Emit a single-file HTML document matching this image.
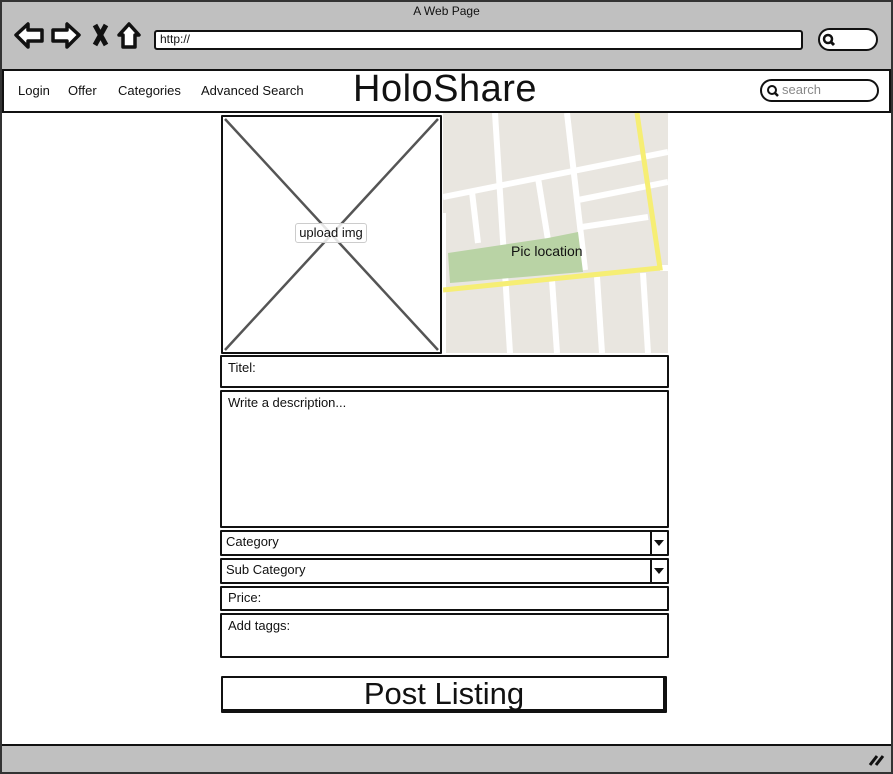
<!DOCTYPE html>
<html><head><meta charset="utf-8"><style>
*{margin:0;padding:0;box-sizing:border-box}
body{width:893px;height:774px;background:#fff;position:relative;overflow:hidden;font-family:"Liberation Sans",sans-serif;color:#111}
.a{position:absolute}
.box{position:absolute;border:2px solid #111;background:#fff;border-radius:1px}
.lbl{position:absolute;font-size:13px}
</style></head><body>
<div class="a" style="left:0;top:0;width:893px;height:774px;border:2px solid #333;background:#fff"></div>
<div class="a" style="left:2px;top:2px;width:889px;height:67px;background:#c0c0c0"></div>
<div class="lbl" style="left:0;width:893px;text-align:center;top:4px;font-size:12px">A Web Page</div>
<svg class="a" style="left:12px;top:20px" width="135" height="32" viewBox="0 0 135 32" fill="#fff" stroke="#111" stroke-width="3.5" stroke-linejoin="round">
<path d="M4 15 L16 4 L16 10 L30 10 L30 21 L16 21 L16 27 Z"/>
<path d="M67 15 L55 4 L55 10 L41 10 L41 21 L55 21 L55 27 Z"/>
<path d="M83 5 L94 25 M94 5 L83 25" stroke-width="5" fill="none"/>
<path d="M107 15 L117 4 L127 15 L123 15 L123 27 L111 27 L111 15 Z"/>
</svg>
<div class="box" style="left:154px;top:30px;width:649px;height:20px;border-radius:3px"></div>
<div class="lbl" style="left:160px;top:32px;font-size:12px">http://</div>
<div class="box" style="left:818px;top:28px;width:60px;height:23px;border-radius:12px"></div>
<svg class="a" style="left:822px;top:33px" width="14" height="14"><circle cx="6" cy="6" r="4" fill="none" stroke="#111" stroke-width="2.5"/><path d="M9 9 L12 12" stroke="#111" stroke-width="3"/></svg>
<div class="a" style="left:2px;top:69px;width:889px;height:44px;border:2px solid #111;background:#fff"></div>
<div class="lbl" style="left:18px;top:83px">Login</div>
<div class="lbl" style="left:68px;top:83px">Offer</div>
<div class="lbl" style="left:118px;top:83px">Categories</div>
<div class="lbl" style="left:201px;top:83px">Advanced Search</div>
<div class="lbl" style="left:353px;top:68px;font-size:38px;letter-spacing:0.5px">HoloShare</div>
<div class="box" style="left:760px;top:79px;width:119px;height:23px;border-radius:12px"></div>
<svg class="a" style="left:766px;top:84px" width="14" height="14"><circle cx="6" cy="6" r="4" fill="none" stroke="#111" stroke-width="2"/><path d="M9 9 L12 12" stroke="#111" stroke-width="2.5"/></svg>
<div class="lbl" style="left:782px;top:82px;color:#888">search</div>

<div class="box" style="left:221px;top:115px;width:221px;height:239px"></div>
<svg class="a" style="left:223px;top:117px" width="217" height="235"><path d="M2 2 L215 233 M215 2 L2 233" stroke="#555" stroke-width="2.5"/></svg>
<div class="a" style="left:295px;top:223px;width:72px;height:20px;border:1px solid #ccc;border-radius:3px;background:rgba(255,255,255,.85);font-size:13px;text-align:center;line-height:18px">upload img</div>

<svg class="a" style="left:443px;top:113px" width="225" height="240" viewBox="0 0 225 240">
<rect width="225" height="240" fill="#e9e6e0"/>
<g stroke="#fff" stroke-width="6" fill="none">
<path d="M0 84 L225 39"/><path d="M135 87 L225 69"/><path d="M139 114 L205 104"/>
<path d="M52 0 L67 240"/><path d="M124 0 L142 157"/><path d="M29 79 L35 130"/><path d="M95 65 L105 127"/>
<path d="M109 167 L114 240"/><path d="M154 164 L159 240"/><path d="M200 160 L205 240"/><path d="M0 100 L0 240" /><path d="M217 155 L225 155"/>
</g>
<path d="M5 140 L105 125 L135 119 L140 159 L7 170 Z" fill="#b9d3a5"/>
<path d="M194 0 L217 155 L0 177" stroke="#f6ee74" stroke-width="5" fill="none"/>
</svg>
<div class="lbl" style="left:511px;top:243px;font-size:14px">Pic location</div>

<div class="box" style="left:220px;top:355px;width:449px;height:33px"></div>
<div class="lbl" style="left:228px;top:360px">Titel:</div>
<div class="box" style="left:220px;top:390px;width:449px;height:138px"></div>
<div class="lbl" style="left:228px;top:395px">Write a description...</div>
<div class="box" style="left:220px;top:530px;width:449px;height:26px"></div>
<div class="a" style="left:650px;top:530px;width:2px;height:26px;background:#111"></div>
<div class="a" style="left:654px;top:540px;border:5px solid transparent;border-top:6px solid #111"></div>
<div class="lbl" style="left:226px;top:534px">Category</div>
<div class="box" style="left:220px;top:558px;width:449px;height:26px"></div>
<div class="a" style="left:650px;top:558px;width:2px;height:26px;background:#111"></div>
<div class="a" style="left:654px;top:568px;border:5px solid transparent;border-top:6px solid #111"></div>
<div class="lbl" style="left:226px;top:562px">Sub Category</div>
<div class="box" style="left:220px;top:586px;width:449px;height:25px"></div>
<div class="lbl" style="left:228px;top:590px">Price:</div>
<div class="box" style="left:220px;top:613px;width:449px;height:45px"></div>
<div class="lbl" style="left:228px;top:618px">Add taggs:</div>
<div class="box" style="left:221px;top:676px;width:446px;height:37px;border-right:4px solid #111;border-bottom:4px solid #111"></div>
<div class="lbl" style="left:221px;top:676px;width:446px;text-align:center;font-size:31px;line-height:36px">Post Listing</div>

<div class="a" style="left:2px;top:744px;width:889px;height:28px;background:#c0c0c0;border-top:2px solid #111"></div>
<svg class="a" style="left:868px;top:753px" width="18" height="14"><path d="M2 12 L9 3 M8 12 L15 3" stroke="#111" stroke-width="3"/></svg>
</body></html>
